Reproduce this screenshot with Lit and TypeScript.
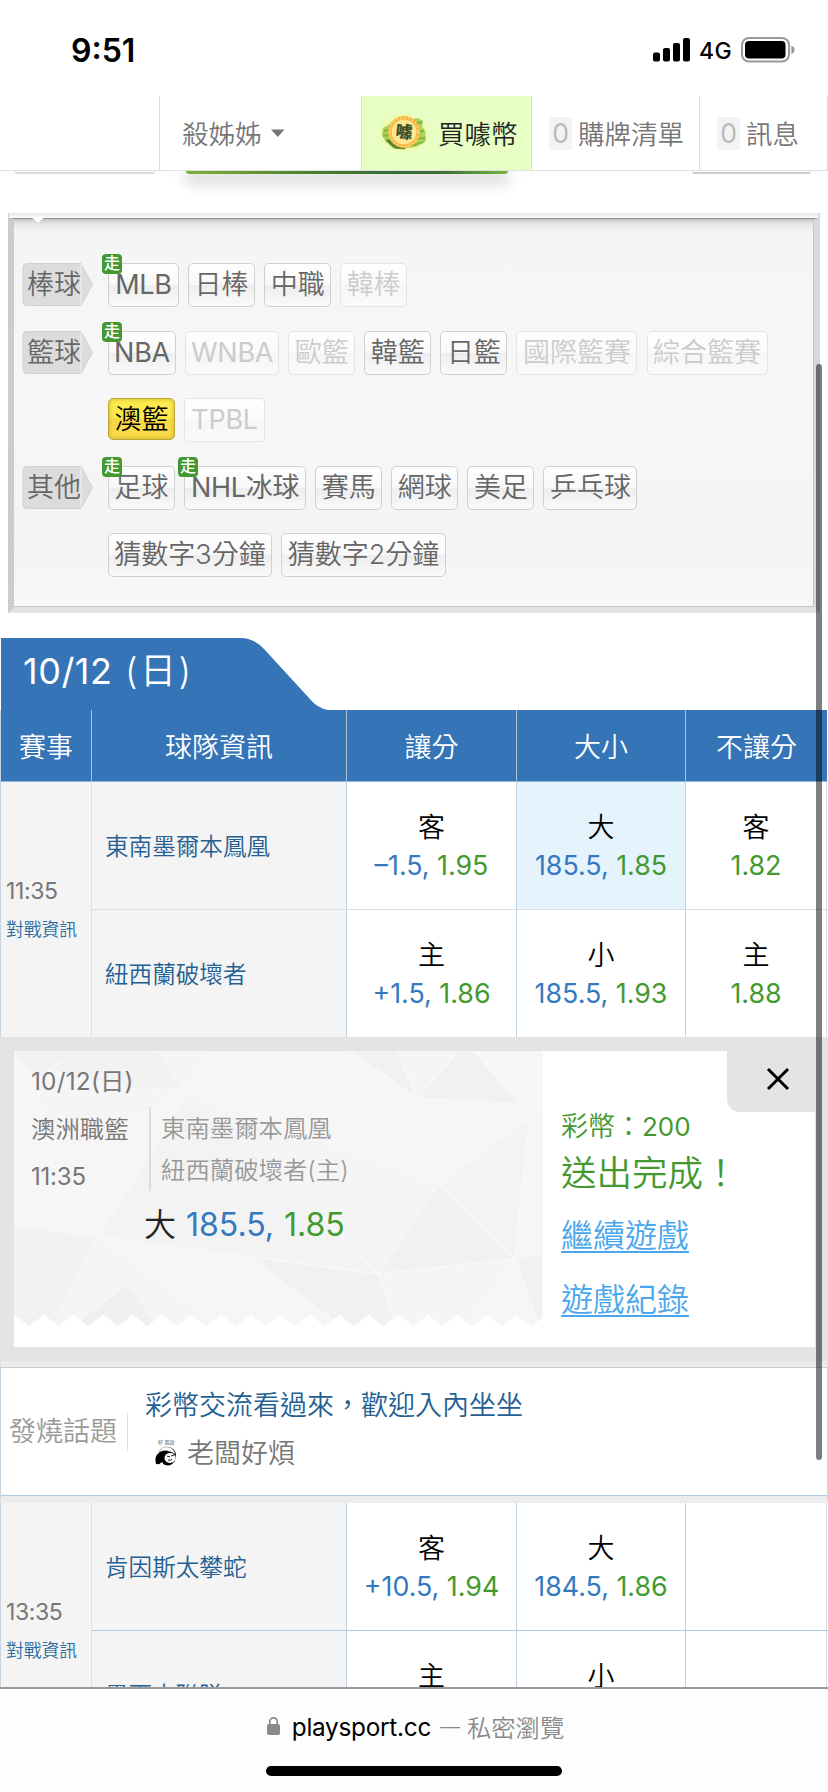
import { LitElement, html, css, svg, nothing } from "lit";
import { customElement, property } from "lit/decorators.js";

const base = css`
  * { box-sizing: border-box; }
  :host { font-family: Inter, "Noto Sans CJK TC", sans-serif; font-weight: 350; }
`;

@customElement("status-bar")
class StatusBar extends LitElement {
  static styles = [base, css`
    :host { display: flex; height: 96px; justify-content: space-between; align-items: flex-start; padding: 31px 33px 0 71px; background: #fff; color: #000; }
    .time { font-size: 32px; font-weight: 600; line-height: 40px; letter-spacing: 0; }
    .right { display: flex; align-items: center; height: 38px; }
    .net { font-size: 23px; font-weight: 450; margin: 1px 9px 0 8px; letter-spacing: 0.3px; }
    svg { display: block; }
  `];
  render() {
    return html`
      <div class="time">9:51</div>
      <div class="right">
        <svg width="38" height="24" viewBox="0 0 38 24">
          <rect x="0" y="14.5" width="7" height="9" rx="2"/><rect x="10" y="10" width="7" height="13.5" rx="2"/>
          <rect x="20" y="5" width="7" height="18.5" rx="2"/><rect x="30" y="0" width="7" height="23.5" rx="2"/>
        </svg>
        <span class="net">4G</span>
        <svg width="54" height="26" viewBox="0 0 54 26">
          <rect x="1" y="1" width="47" height="23.5" rx="7" fill="none" stroke="#999" stroke-width="2"/>
          <rect x="4" y="4" width="40.5" height="17.5" rx="4"/>
          <path d="M50.3 8.5 q3.2 1 3.2 4.3 t-3.2 4.3z" fill="#999"/>
        </svg>
      </div>`;
  }
}

@customElement("user-nav")
class UserNav extends LitElement {
  static styles = [base, css`
    :host { display: grid; grid-template-columns: 160px 202px 170px 168px 128px; height: 75px; border-bottom: 1px solid #e0e0e0; font-size: 26.5px; color: #777; background: #fff; position: relative; }
    .cell { display: flex; align-items: center; border-right: 1px solid #ddd; padding-bottom: 2px; white-space: nowrap; }
    .user { padding-left: 22px; gap: 9px; }
    .buy { background: #e7ffc4; padding-left: 18px; gap: 10px; color: #222; }
    .n { padding-left: 17px; gap: 6px; }
    .count { font-weight: 400; width: 23px; height: 33px; margin-top: 2px; border-radius: 3px; background: #f3f3f3; color: #bbb; display: flex; align-items: center; justify-content: center; }
    svg { display: block; margin-top: 2px; }
  `];
  render() {
    return html`
      <div class="cell"></div>
      <div class="cell user">殺姊姊<svg width="14" height="8"><path d="M0 .5h13.5L6.7 8z" fill="#777"/></svg></div>
      <div class="cell buy">
        <svg width="48" height="40" viewBox="0 0 48 40">
          <ellipse cx="24" cy="20" rx="24" ry="19" fill="#f3f79e" opacity=".6"/>
          <path d="M3 15 L12 10 L38 5 L43 8 L42 14 L45 17 L46 28 L36 34 L14 36 L6 29 L2 22z" fill="#abd25c"/>
          <path d="M4 18 L42 9 M3 23 L44 18 M6 28 L45 25 M30 33 L44 29" stroke="#7db63a" stroke-width="1.800"/>
          <path d="M6 26 Q12 38 26 36 L14 28z" fill="#557f35"/>
          <circle cx="24" cy="19" r="16" fill="#f7b640"/>
          <circle cx="24" cy="19" r="14.500" fill="none" stroke="#ffd98a" stroke-width="1.500" stroke-dasharray="2 2"/>
          <circle cx="24" cy="19" r="12.500" fill="#ffe691"/>
          <text x="24" y="25" font-size="17" font-weight="900" text-anchor="middle" fill="#3a5226" transform="rotate(6 24 19)">噱</text>
        </svg>買噱幣</div>
      <div class="cell n"><span class="count">0</span>購牌清單</div>
      <div class="cell n"><span class="count">0</span>訊息</div>`;
  }
}

@customElement("league-chip")
class LeagueChip extends LitElement {
  @property() label = "";
  @property() kind = "";
  @property({ type: Boolean }) live = false;
  @property({ type: Number }) w = 0;
  static styles = [base, css`
    :host { display: block; }
    .chip { position: relative; height: 44px; border: 1px solid #d0d0d0; border-radius: 5px; background: linear-gradient(#fefefe, #f8f8f8 50%, #ededed 50%, #fafafa); color: #666; font-size: 27px; line-height: 42px; text-align: center; white-space: nowrap; }
    .latin { letter-spacing: -0.25px; font-weight: 400; }
    .off { border-color: #e4e4e4; color: #ccc; background: linear-gradient(#fefefe, #fafafa 50%, #f6f6f6 50%, #fafafa); }
    .on { height: 42px; border-color: #bba83c; color: #000; background: linear-gradient(#fdec50, #fbe64c 50%, #f8d845 50%, #fadc4c); box-shadow: inset 0 0 4px rgba(170,140,0,.6); }
    .live { position: absolute; left: -7px; top: -10px; width: 20px; height: 20px; border-radius: 4px; background: #43992f; color: #fff; font-size: 16px; font-weight: 500; line-height: 19px; letter-spacing: 0; }
  `];
  render() {
    const latin = /^[A-Z]/.test(this.label) ? "latin" : "";
    return html`<div class="chip ${this.kind} ${latin}" style="width:${this.w}px">${this.label}${this.live ? html`<span class="live">走</span>` : nothing}</div>`;
  }
}

type Chip = [string, number, string?, boolean?];
const groups: { name: string; rows: Chip[][] }[] = [
  { name: "棒球", rows: [[["MLB", 71, "", true], ["日棒", 67], ["中職", 67], ["韓棒", 67, "off"]]] },
  { name: "籃球", rows: [
    [["NBA", 68, "", true], ["WNBA", 94, "off"], ["歐籃", 67, "off"], ["韓籃", 67], ["日籃", 67], ["國際籃賽", 121, "off"], ["綜合籃賽", 121, "off"]],
    [["澳籃", 67, "on"], ["TPBL", 81, "off"]]] },
  { name: "其他", rows: [
    [["足球", 67, "", true], ["NHL冰球", 122, "", true], ["賽馬", 67], ["網球", 67], ["美足", 67], ["乒乓球", 94]],
    [["猜數字3分鐘", 164], ["猜數字2分鐘", 165]]] },
];

@customElement("league-panel")
class LeaguePanel extends LitElement {
  static styles = [base, css`
    :host { display: block; padding: 0 8px; height: 441px; }
    .banner { height: 3px; margin: 0 0 0 178px; width: 322px; background: linear-gradient(90deg, #7fb13b, #4b7d2d 40%, #3a6a3c 65%, #3f6f33 80%, #78b63a); border-radius: 0 0 6px 6px; box-shadow: 0 6px 14px 2px rgba(0,0,0,.25); }
    .sides { display: flex; justify-content: space-between; padding: 0 9px 0 6px; height: 3px; margin-top: -3px; }
    .sides i { height: 3px; border-bottom: 2px solid #ddd; border-radius: 0 0 6px 6px; width: 141px; }
    .sides i + i { width: 119px; border-color: #ccc; }
    .lip { margin-top: 39px; height: 5px; background: linear-gradient(#e6e6e6, #f4f4f4 70%, #fff); border: solid #ccc; border-width: 0 1px; }
    .box { position: relative; height: 395px; border: solid #ccc; border-width: 1px 6px 6px 6px; border-color: #909090 #d9d9d9 #e4e4e4 #ccc; background: linear-gradient(#c4c4c4, #e6e6e6 5px, #f1f1f1 11px, #f5f5f5 20px, #f7f7f7 50%, #f4f4f4 80%, #f7f7f7); padding: 44px 0 0 8px; box-shadow: inset -1px -1px 0 #c6c6c6; }
    .notch { position: absolute; left: 17px; top: -2px; width: 0; height: 0; border: 7px solid transparent; border-top: 6px solid #fbfbfb; border-bottom: 0; }
    .group { display: flex; }
    .name { width: 86px; flex: none; }
    .tag { display: block; }
    .row { display: flex; gap: 9.100px; height: 67.6px; }
    .tt { font-size: 27px; fill: #666; }
  `];
  render() {
    return html`
      <div class="banner"></div>
      <div class="sides"><i></i><i></i></div>
      <div class="lip"></div>
      <div class="box"><div class="notch"></div>
        ${groups.map(g => html`<div class="group">
          <div class="name"><svg class="tag" width="73" height="43" viewBox="0 0 73 43">
            <path d="M5 .5H59L70.5 21.5 59 42.5H5Q1 42.500 1 38.500V4.500Q1 .5 5 .5z" fill="#dcdcdc" stroke="#d0d0d0"/>
            <path d="M59 1V42" stroke="#f2f2f2"/>
            <text class="tt" x="5" y="31">${g.name}</text>
          </svg></div>
          <div>${g.rows.map(r => html`<div class="row">${r.map(([l, w, k, live]) => html`<league-chip .label=${l} .w=${w} .kind=${k ?? ""} .live=${!!live}></league-chip>`)}</div>`)}</div>
        </div>`)}
      </div>`;
  }
}

@customElement("odds-cell")
class OddsCell extends LitElement {
  @property() side = "";
  @property() line = "";
  @property() odds = "";
  static styles = [base, css`
    :host { display: flex; flex-direction: column; align-items: center; justify-content: center; padding-top: 2px; font-size: 27px; line-height: 38px; color: #000; white-space: nowrap; }
    .num { font-size: 26.8px; font-weight: 400; letter-spacing: 0; min-height: 37px; line-height: 37px; }
    .line { color: #3479bf; } .odds { color: #43992f; }
  `];
  render() {
    return html`<div>${this.side}</div><div class="num"><span class="line">${this.line ? this.line + ", " : ""}</span><span class="odds">${this.odds}</span></div>`;
  }
}

type Odds = [string, string, string] | null;
@customElement("match-rows")
class MatchRows extends LitElement {
  @property() time = "";
  @property({ attribute: false }) teams: { name: string; odds: Odds[]; pick?: number }[] = [];
  @property({ type: Boolean, reflect: true }) blue = false;
  static styles = [base, css`
    :host { display: grid; grid-template-columns: 91px 1fr; border-left: 1px solid #c5d3de; --rule: #dcdfe2; }
    :host([blue]) { --rule: #b3cbe0; }
    .when { background: #f4f4f4; border-right: 1px solid #dcdfe4; padding: 1px 0 0 5px; display: flex; flex-direction: column; justify-content: center; gap: 7px; color: #777; font-size: 23px; line-height: 32px; letter-spacing: -0.4px; white-space: nowrap; font-weight: 400; }
    .vs { font-size: 17.8px; color: #2d6da0; letter-spacing: 0; font-weight: 350; }
    .row { display: grid; grid-template-columns: 255px 170px 169px 141px; height: 127px; }
    .row + .row { border-top: 1px solid var(--rule); height: 128px; }
    .c { border-right: 1px solid #c0d3e4; display: grid; }
    .c:nth-child(n+4) { border-color: #dcdce4; }
    .team { background: #f4f4f4; color: #246093; font-size: 23.6px; align-items: center; padding: 0 0 2px 13px; }
    .pick { background: #e5f3fd; }
  `];
  render() {
    return html`<div class="when"><span>${this.time}</span><span class="vs">對戰資訊</span></div>
      <div>${this.teams.map(t => html`<div class="row"><div class="c team">${t.name}</div>
        ${t.odds.map((o, i) => html`<div class="c ${t.pick === i ? "pick" : ""}">${o ? html`<odds-cell .side=${o[0]} .line=${o[1]} .odds=${o[2]}></odds-cell>` : nothing}</div>`)}</div>`)}</div>`;
  }
}

const facets: [string, string][] = [
  ["39,63 215,63 135,120 100,150", "#f1f1f1"],
  ["215,63 440,63 515,178 380,176 135,120", "#f2f2f2"],
  ["100,150 380,176 515,178 430,230 170,370 120,250", "#f5f5f5"],
  ["528,190 275,618 1055,730 790,440", "#f3f3f3"],
  ["528,190 1230,462 1058,730 790,440", "#f5f5f5"],
  ["440,63 585,63 520,178", "#f5f5f5"],
  ["980,63 1110,63 1165,200", "#f1f1f1"],
  ["1110,63 1280,63 1172,200", "#f5f5f5"],
  ["1325,63 1455,220 1170,204 1285,63", "#f1f1f1"],
  ["1455,220 1325,63 1520,63 1520,260", "#f7f7f7"],
  ["1482,262 1230,462 1440,685", "#f3f3f3"],
  ["1230,462 1440,685 1060,730", "#f1f1f1"],
  ["39,583 265,620 150,890 39,890", "#f2f2f2"],
  ["265,620 275,618 590,870 600,890 150,890", "#f5f5f5"],
  ["360,758 440,890 200,890", "#f0f0f0"],
  ["700,680 1058,732 1110,890 960,890", "#f1f1f1"],
  ["1060,730 1440,688 1300,890 1110,890", "#f5f5f5"],
  ["1445,688 1520,668 1520,890 1510,890", "#f1f1f1"],
];

@customElement("bet-result")
class BetResult extends LitElement {
  static styles = [base, css`
    :host { display: block; position: relative; background: #e4e4e4; height: 324px; padding: 14px 13px 0 14px; }
    .card { display: flex; background: #fff; height: 296px; }
    .ticket { width: 529px; height: 276px; position: relative; display: grid; grid-template-columns: 137px 1fr; grid-template-rows: 56px 84px 1fr; padding-left: 17px; color: #777; font-size: 24.4px; }
    .bg { position: absolute; inset: 0; width: 100%; height: 100%; }
    .ticket > div { position: relative; }
    .date { grid-column: 1 / 3; line-height: 60px; letter-spacing: 0.2px; font-weight: 400; }
    .meta { display: flex; flex-direction: column; line-height: 47px; border-right: 2px solid #ddd; width: 120px; }
    .meta span { margin-top: -1px; margin-bottom: 1px; }
    .clock { font-weight: 400; font-size: 24px; letter-spacing: -0.2px; }
    .teams { display: flex; flex-direction: column; line-height: 42px; color: #999; margin-left: -7px; }
    .pick { grid-column: 1 / 3; padding-left: 113px; font-size: 32px; line-height: 68px; color: #222; word-spacing: 1px; }
    .b { color: #3479bf; font-weight: 400; } .g { color: #43992f; font-weight: 400; }
    .done { padding: 58px 0 0 18px; color: #43992f; font-size: 27px; line-height: 35px; display: flex; flex-direction: column; align-items: flex-start; white-space: nowrap; }
    .amt { font-size: 26px; font-weight: 400; }
    .big { font-size: 35.500px; line-height: 60px; }
    a { font-size: 32px; color: #4aa7ee; line-height: 64px; text-decoration: underline; text-decoration-thickness: 2px; text-underline-offset: 4px; }
    .close { position: absolute; right: 12px; top: 0; width: 89px; height: 75px; background: #e4e4e4; border-radius: 0 0 0 13px; display: grid; place-items: center; padding: 9px 0 0 12px; }
  `];
  render() {
    const teeth = Array.from({ length: 18 }, (_, i) => `L${81 + i * 82.7} 888 L${123 + i * 82.7} 853`).join(" ");
    return html`<div class="card">
        <div class="ticket">
          <svg class="bg" viewBox="39 63 1481 827" preserveAspectRatio="none">
            <rect x="39" y="63" width="1481" height="827" fill="#f6f6f6"/>
            ${facets.map(([p, f]) => svg`<polygon points=${p} fill=${f} stroke="#f8f8f8" stroke-width="3"/>`)}
            <path d="M39 890 V853 ${teeth} L1520 890z" fill="#fff"/>
          </svg>
          <div class="date">10/12(日)</div>
          <div class="meta"><span>澳洲職籃</span><span class="clock">11:35</span></div>
          <div class="teams"><span>東南墨爾本鳳凰</span><span>紐西蘭破壞者(主)</span></div>
          <div class="pick">大 <span class="b">185.5,</span> <span class="g">1.85</span></div>
        </div>
        <div class="done"><span>彩幣：<span class="amt">200</span></span><span class="big">送出完成！</span><a>繼續遊戲</a><a>遊戲紀錄</a></div>
      </div>
      <div class="close"><svg width="24" height="24" viewBox="0 0 24 24"><path d="M2 2L22 22M22 2L2 22" stroke="#000" stroke-width="3"/></svg></div>`;
  }
}

@customElement("hot-topic")
class HotTopic extends LitElement {
  static styles = [base, css`
    :host { display: flex; height: 142px; background: #fff; border: solid #c5d3de; border-width: 6px 1px 7px; border-top-color: #ececec; border-bottom-color: #ececec; box-shadow: inset 0 1px 0 #ccc, inset 0 -1px 0 #b3cbe0; font-size: 27px; }
    .tag { width: 127px; height: 38px; margin-top: 46px; padding-left: 8px; line-height: 38px; color: #999; border-right: 1px solid #ddd; white-space: nowrap; }
    .body { padding: 19px 0 0 17px; }
    .title { color: #246093; line-height: 40px; }
    .by { display: flex; align-items: center; gap: 9px; color: #777; line-height: 40px; padding: 8px 0 0 10px; }
    svg { display: block; margin-top: -2px; }
  `];
  render() {
    return html`<div class="tag">發燒話題</div>
      <div class="body"><div class="title">彩幣交流看過來，歡迎入內坐坐</div>
        <div class="by"><svg width="23" height="30" viewBox="0 0 23 30">
          <text x="3" y="6" font-size="5" fill="#444">好 我說</text>
          <path d="M4 15Q6 8 13 9 20 10 21 16L20 23Q15 29 11 27L1 26Q-1 18 4 15z" fill="#000"/>
          <path d="M4 14Q7 8 13 9 19 10 20 16 12 10 4 14z" fill="#fff" stroke="#999" stroke-width=".6"/>
          <ellipse cx="15" cy="20" rx="5.500" ry="5" fill="#fff"/><path d="M12 18l3 1M16 18l3-1M13 22q3 1 4-1" stroke="#222" fill="none"/>
          <path d="M3 27l4-3 3 4z" fill="#fff"/>
        </svg>老闆好煩</div></div>`;
  }
}

@customElement("app-root")
class AppRoot extends LitElement {
  static styles = [base, css`
    :host { display: flex; flex-direction: column; position: relative; width: 828px; height: 1792px; background: #fff; overflow: hidden; }
    .page { height: 1687px; flex: none; overflow: hidden; }
    .tab { display: block; margin-top: 26px; height: 72px; }
    .tabt { font-size: 36px; fill: #fff; }
    .paren { letter-spacing: 2.500px; }
    .head { display: grid; grid-template-columns: 91px 255px 170px 169px 141px; height: 72px; background: #3474b7; color: #fff; font-size: 27px; border-bottom: 1px solid #8fb5d8; margin: 0 1px 0 0; border-left: 1px solid #c5d3de; }
    .head span { display: grid; place-items: center; border-right: 1px solid #a9c3dc; padding-bottom: 1px; }
    .head span:last-child { border: 0; }
    .bar { height: 105px; flex: none; background: #fdfdfd; border-top: 2px solid #9a9a9a; display: grid; grid-template-rows: 77px 10px; justify-items: center; }
    .url { display: flex; align-items: center; font-size: 24.300px; color: #8a8a8e; padding: 0 0 2px 3px; }
    .url svg { margin: -2px 12px 0 0; }
    .host { color: #000; font-weight: 400; letter-spacing: -0.25px; margin-right: 9px; }
    .dash { font-size: 20px; margin-right: 7px; }
    .home { width: 296px; height: 10px; border-radius: 5px; background: #000; }
    .scroll { position: absolute; left: 816px; top: 364px; width: 6px; height: 1096px; border-radius: 3px; background: rgba(0,0,0,.5); }
  `];
  render() {
    return html`
      <div class="page">
        <status-bar></status-bar>
        <user-nav></user-nav>
        <league-panel></league-panel>
        <svg class="tab" width="340" height="72" viewBox="0 0 340 72">
          <path d="M1 0H240Q254 0 264 11L309 60Q317 70 328 72H1z" fill="#3474b7"/>
          <text class="tabt" x="23" y="46"><tspan textLength="89" font-weight="400">10/12</tspan><tspan class="paren" x="125">(日)</tspan></text>
        </svg>
        <div class="head"><span>賽事</span><span>球隊資訊</span><span>讓分</span><span>大小</span><span>不讓分</span></div>
        <match-rows time="11:35" .teams=${[
          { name: "東南墨爾本鳳凰", pick: 1, odds: [["客", "–1.5", "1.95"], ["大", "185.5", "1.85"], ["客", "", "1.82"]] },
          { name: "紐西蘭破壞者", odds: [["主", "+1.5", "1.86"], ["小", "185.5", "1.93"], ["主", "", "1.88"]] }]}></match-rows>
        <bet-result></bet-result>
        <hot-topic></hot-topic>
        <match-rows blue time="13:35" .teams=${[
          { name: "肯因斯太攀蛇", odds: [["客", "+10.5", "1.94"], ["大", "184.5", "1.86"], null] },
          { name: "墨爾本聯隊", odds: [["主", "", ""], ["小", "", ""], null] }]}></match-rows>
      </div>
      <div class="bar">
        <div class="url"><svg width="13" height="19" viewBox="0 0 13 19"><rect y="8" width="13" height="11" rx="2" fill="#8a8a8e"/><path d="M2.800 9V5.500a3.700 3.700 0 0 1 7.400 0V9" fill="none" stroke="#8a8a8e" stroke-width="1.700"/></svg><span class="host">playsport.cc</span><span class="dash">—</span>私密瀏覽</div>
        <div class="home"></div>
      </div>
      <div class="scroll"></div>`;
  }
}
